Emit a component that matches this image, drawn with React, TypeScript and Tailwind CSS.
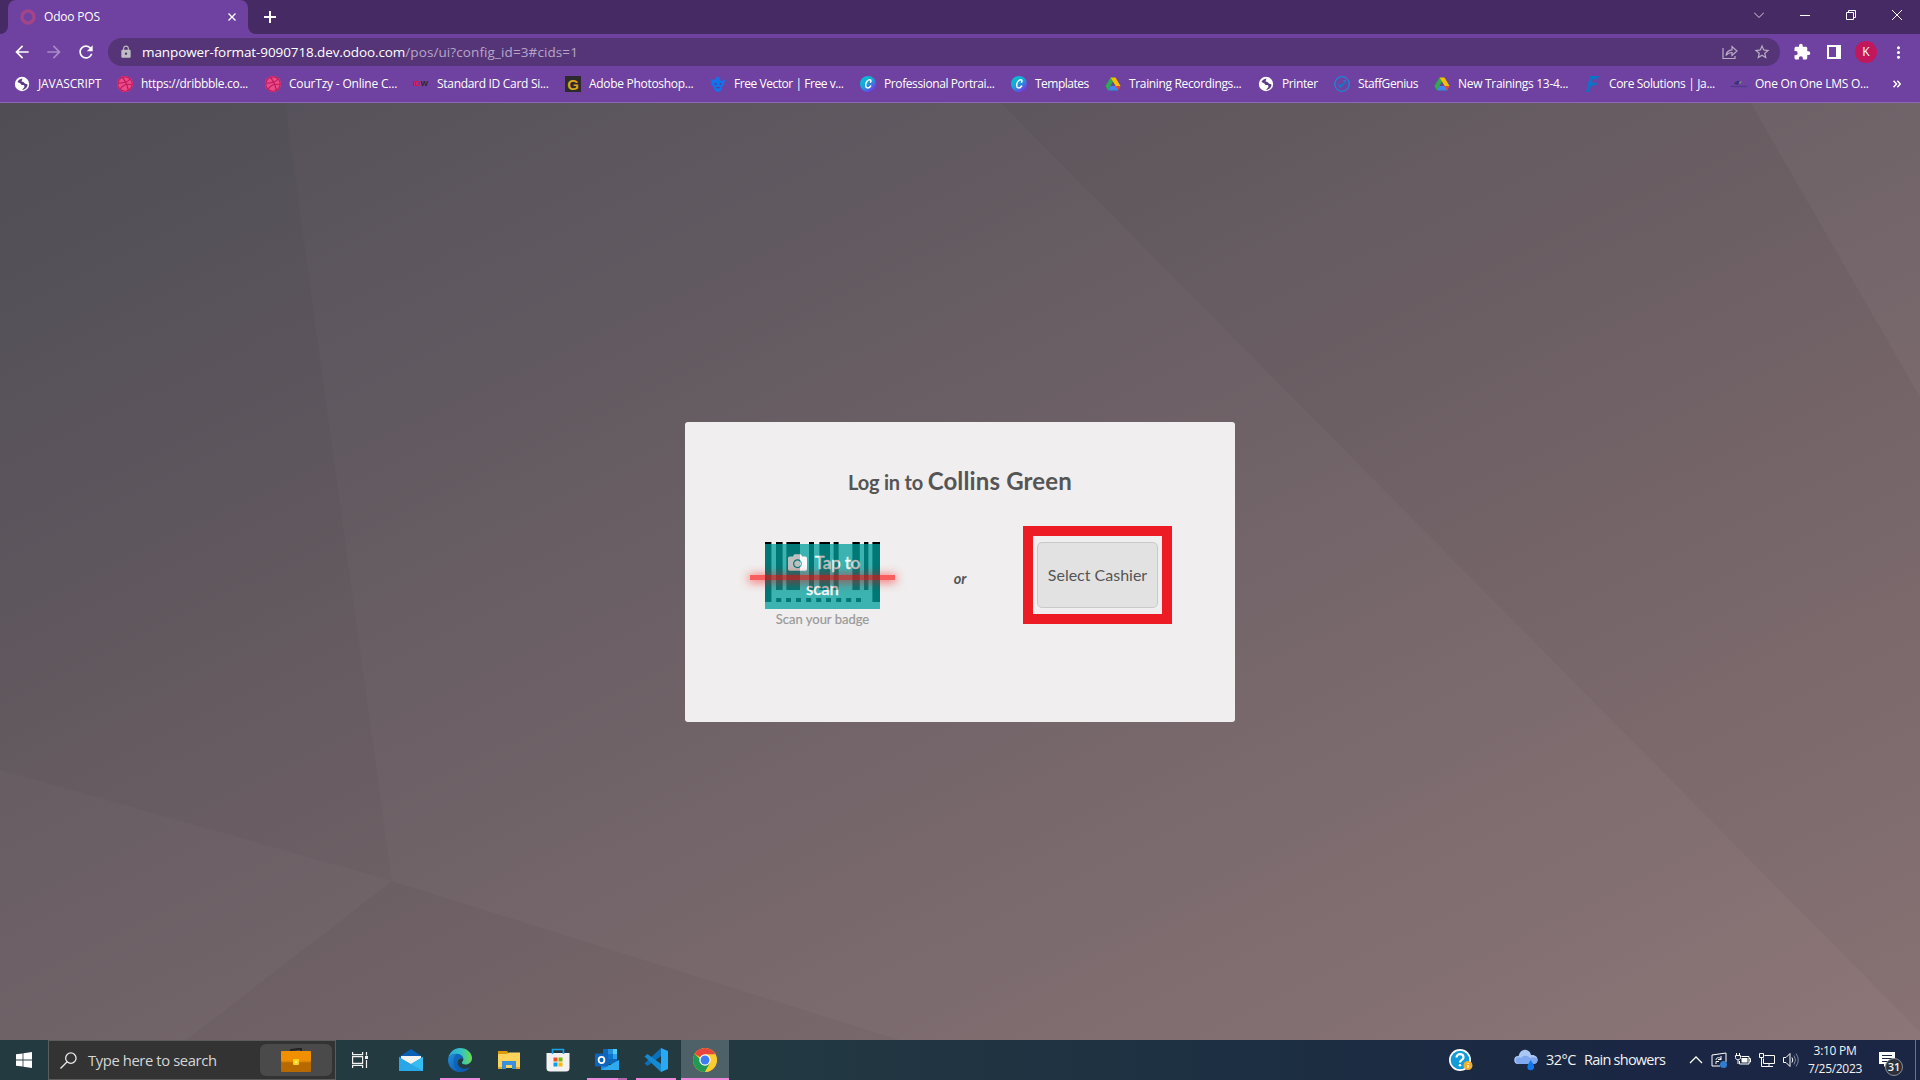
import React from "react";
import { MdArrowBack, MdArrowForward, MdRefresh, MdLock, MdStarOutline, MdExtension, MdMoreVert } from "react-icons/md";
import { FaDribbble, FaCamera } from "react-icons/fa";

const Dribbble = () => (
  <span className="flex size-4 items-center justify-center rounded-full bg-[#ea4c89]">
    <FaDribbble className="size-4 text-[#c2185b]" />
  </span>
);
const Globe = () => (
  <svg viewBox="0 0 16 16" className="size-4">
    <circle cx="8" cy="8" r="7.200" fill="#fff" />
    <path d="M8.500 2.500C6 3 4 4 3.500 6l3 1.500 1 1.500h2.500l.5 2-2.500 3c3.500-.3 5.500-3 5.500-5.500-1.500-.5-3-1-4-2.500l-2-.5z" fill="#5b3a86" />
  </svg>
);
const IdwLogo = () => (
  <span className="block w-4 font-['Liberation_Sans'] text-[8px] leading-4 font-bold tracking-[-0.3px] text-[#2c2735]">
    <span className="text-[#d3193f]">ID</span>W
  </span>
);
const GLogo = () => (
  <span className="flex size-4 items-center justify-center bg-[#2c2a2b] font-['Liberation_Sans'] text-[15px] leading-none font-bold text-[#d9a520]">G</span>
);
const Freepik = () => (
  <svg viewBox="0 0 16 16" className="size-4" fill="#1273eb">
    <path d="M7 0l3 2-1 2 3 1 4-2-2 4 .5 2-2 1c-1 4-2.500 6-4.500 6s-4-2-5-6L.5 8 2 6 0 3l4 1 2-1z" />
    <g fill="#5a3b9e"><circle cx="5.500" cy="8" r="1.100" /><circle cx="10.500" cy="8" r="1.100" /><path d="M5.500 11h5l-1.500 1.200h-2z" /></g>
  </svg>
);
const Canva = () => (
  <svg viewBox="0 0 16 16" className="size-4">
    <defs>
      <linearGradient id="canva" x1="0" y1="0" x2=".8" y2="1">
        <stop offset="0" stopColor="#00c8cc" /><stop offset=".5" stopColor="#18a5da" /><stop offset="1" stopColor="#7d2ae8" />
      </linearGradient>
    </defs>
    <circle cx="8" cy="8" r="8" fill="url(#canva)" />
    <path d="M10.500 6.200c.8-1 .7-2.500-.8-2.500-2 0-4 2.800-4 5.500 0 3.500 3.200 3.500 5 .8" fill="none" stroke="#fff" strokeWidth="1.400" strokeLinecap="round" />
  </svg>
);
const Drive = () => (
  <svg viewBox="0 0 16 16" className="size-4">
    <path d="M5.500 1.500h5l5 8.500-2.500 4.500H3L.5 10z" fill="#188038" />
    <path d="M5.500 1.500L8 5.800 3 14.500.5 10z" fill="#34a853" />
    <path d="M5.500 1.500h5l5 8.500h-5z" fill="#fbbc04" />
    <path d="M3 14.500L5.500 10h10L13 14.500z" fill="#4285f4" />
    <path d="M10.500 10h5L13 14.500z" fill="#ea4335" />
    <path d="M8 6l2.500 4h-5z" fill="#6f41a0" />
  </svg>
);
const Staff = () => (
  <svg viewBox="0 0 16 16" className="size-4" fill="none" stroke="#1b87d6">
    <circle cx="8" cy="8" r="7.300" strokeWidth="1.300" />
    <path d="M4.500 8l2.500 2.500L12 5.500" strokeWidth="1.800" stroke="#1276c4" />
    <path d="M5 10.500l2 .5M9 5l3-.5" />
  </svg>
);
const Core = () => (
  <svg viewBox="0 0 16 16" className="size-4" fill="#0b74c6">
    <path d="M5 0h9l-1.500 3.200H7.500L7 6.500h5L11 9.500H6L4 16H1z" />
  </svg>
);
const OneOnOne = () => (
  <svg viewBox="0 0 16 16" className="size-4">
    <path d="M3 8q2-4 6-3l-2 4z" fill="#39347d" /><path d="M8 6l3-1-2 3z" fill="#79a16b" />
    <path d="M0 10.500h16" stroke="#4a3a88" strokeWidth="1.200" />
  </svg>
);

const bookmarks: { icon: React.FC; label: string; box: string; text: string }[] = [
  { icon: Globe, label: "JAVASCRIPT", box: "w-[103px]", text: "tracking-[-0.1px]" },
  { icon: Dribbble, label: "https://dribbble.co...", box: "w-[148px]", text: "tracking-[-0.3px]" },
  { icon: Dribbble, label: "CourTzy - Online C...", box: "w-[148px]", text: "tracking-[-0.2px]" },
  { icon: IdwLogo, label: "Standard ID Card Si...", box: "w-[152px]", text: "tracking-[-0.3px]" },
  { icon: GLogo, label: "Adobe Photoshop...", box: "w-[145px]", text: "tracking-[-0.3px]" },
  { icon: Freepik, label: "Free Vector | Free v...", box: "w-[150px]", text: "tracking-[-0.45px]" },
  { icon: Canva, label: "Professional Portrai...", box: "w-[151px]", text: "tracking-[-0.4px]" },
  { icon: Canva, label: "Templates", box: "w-[94px]", text: "tracking-[-0.5px]" },
  { icon: Drive, label: "Training Recordings...", box: "w-[153px]", text: "tracking-[-0.35px]" },
  { icon: Globe, label: "Printer", box: "w-[76px]", text: "tracking-[-0.4px]" },
  { icon: Staff, label: "StaffGenius", box: "w-[100px]", text: "tracking-[-0.4px]" },
  { icon: Drive, label: "New Trainings 13-4...", box: "w-[151px]", text: "tracking-[-0.3px]" },
  { icon: Core, label: "Core Solutions | Ja...", box: "w-[146px]", text: "tracking-[-0.35px]" },
  { icon: OneOnOne, label: "One On One LMS O...", box: "w-[154px]", text: "tracking-[-0.25px]" },
];

function TitleBar() {
  return (
    <div className="flex h-[34px] items-stretch bg-[#452a63]">
      <div className="flex w-2 items-end bg-[#6f41a0]"><div className="h-[34px] w-2 rounded-br-lg bg-[#452a63]" /></div>
      <div className="flex w-60 items-center rounded-t-lg bg-[#6f41a0] pl-3 text-white">
        <svg viewBox="0 0 16 16" className="size-4"><circle cx="8" cy="8" r="6" fill="none" stroke="#a24689" strokeWidth="3.400" /></svg>
        <span className="ml-2 w-[184px] text-[12px] tracking-[-0.2px]">Odoo POS</span>
        <svg viewBox="0 0 8 8" className="size-2" stroke="#fff" strokeWidth="1.400"><path d="M.5.5l7 7M7.500.5l-7 7" /></svg>
      </div>
      <div className="flex w-2 items-end bg-[#6f41a0]"><div className="h-[34px] w-2 rounded-bl-lg bg-[#452a63]" /></div>
      <div className="flex flex-1 items-center pl-2">
        <svg viewBox="0 0 12 12" className="size-3" stroke="#fff" strokeWidth="2"><path d="M6 0v12M0 6h12" /></svg>
      </div>
      <div className="flex h-[29px] items-center gap-9 pr-[18px]">
        <svg viewBox="0 0 10 10" className="size-2.5" fill="none" stroke="#d8cfe0"><path d="M0 2.500l5 5 5-5" /></svg>
        <svg viewBox="0 0 10 10" className="size-2.5" stroke="#fff"><path d="M0 5.500h10" /></svg>
        <svg viewBox="0 0 10 10" className="size-2.5" fill="none" stroke="#fff"><path d="M.5 2.500h7v7h-7zM2.500 2.500v-2h7v7h-2" /></svg>
        <svg viewBox="0 0 10 10" className="size-2.5" stroke="#fff"><path d="M0 0l10 10M10 0L0 10" /></svg>
      </div>
    </div>
  );
}

function Toolbar() {
  return (
    <div className="flex h-9 items-center bg-[#6f41a0] text-white">
      <div className="flex w-[108px] items-center gap-3 pl-3">
        <MdArrowBack className="size-5" />
        <MdArrowForward className="size-5 text-[#a98bc8]" />
        <MdRefresh className="size-5" />
      </div>
      <div className="flex h-7 w-[1672px] items-center rounded-full bg-[#553577] pl-[11px]">
        <MdLock className="size-[14px] text-[#c0bcc4]" />
        <div className="ml-[9px] flex-1 text-[13.500px] leading-5 whitespace-nowrap">
          <span className="tracking-[-0.100px]">manpower-format-9090718.dev.odoo.com</span>
          <span className="tracking-[0.100px] text-[#b7a6c9]">/pos/ui?config_id=3#cids=1</span>
        </div>
        <svg viewBox="0 0 16 16" className="mr-[15px] size-4" fill="none" stroke="#b9adc4" strokeWidth="1.200">
          <path d="M1 4v10.500h12V12" /><path d="M4 11.500C4.500 8 6.500 6 10 5.800V2.500l5 4.500-5 4.500V8.500C7.500 8.500 5.500 9.500 4 11.500z" />
        </svg>
        <MdStarOutline className="mr-[9px] size-[18px] text-[#b9adc4]" />
      </div>
      <MdExtension className="ml-[13px] size-[18px]" />
      <div className="ml-4 size-[14px] border-2 border-r-[5px] border-white" />
      <div className="ml-[14px] flex size-[22px] items-center justify-center rounded-full bg-[#c2185b] text-[12px]">K</div>
      <MdMoreVert className="ml-3 size-[19px]" />
    </div>
  );
}

function Bookmarks() {
  return (
    <div className="flex h-[33px] items-center border-b border-[#8f67b7] bg-[#6f41a0] pb-1 pl-[14px] text-[12px] text-white">
      {bookmarks.map(({ icon: Icon, label, box, text }) => (
        <div key={label} className={`flex shrink-0 items-center gap-2 whitespace-nowrap ${box}`}>
          <span className="w-4 shrink-0"><Icon /></span>
          <span className={text}>{label}</span>
        </div>
      ))}
      <svg viewBox="0 0 8 8" className="ml-[8px] size-2" fill="none" stroke="#fff" strokeWidth="1.500"><path d="M.5.8L3.500 4 .5 7.200M4.300.8L7.300 4 4.300 7.200" /></svg>
    </div>
  );
}

const bars = [[0, 6.4, 60], [11, 6.6, 48], [21.4, 13.6, 48], [44, 5, 48], [54.4, 10.600, 48], [68.600, 5, 48], [87.4, 7.4, 48], [99, 4.400, 48], [107.4, 7.6, 60]];
const dots = [11.200, 21, 31, 41.2, 51.2, 61, 71.2, 81.2, 91];

function LoginCard() {
  return (
    <div className="h-[300px] w-[550px] rounded-[3px] bg-[#f0eeee] pt-[43px] font-['Lato'] text-[#555]">
      <h1 className="text-center text-[20px] leading-8 font-bold tracking-[-0.2px] whitespace-nowrap">
        Log in to <span className="text-[24px] tracking-[0.15px]">Collins Green</span>
      </h1>
      <div className="mt-[28px] flex items-start">
        <div className="ml-[65px] w-[145px]">
          <div className="relative mt-4 ml-[15px] h-[67px] w-[115px]">
            <svg viewBox="0 0 115 67" className="block h-[67px] w-[115px]">
              {bars.map(([x, w, h]) => <rect key={x} x={x} y="0" width={w} height={h} />)}
              {dots.map((x) => <rect key={x} x={x} y="56" width="5" height="4" />)}
            </svg>
            <div className="absolute inset-x-0 top-[2px] h-[65px] bg-[#00a09d] pt-[6px] text-center text-[16.700px] leading-[26px] font-medium text-white opacity-75 [-webkit-text-stroke:0.3px_white]">
              <FaCamera className="mr-2 -mt-1 ml-[3px] inline size-[19px]" />Tap to<br />scan
            </div>
            <div className="absolute top-[33px] left-[-15px] h-[5px] w-[145px] bg-[#ff0000] opacity-60 shadow-[0_1px_10px_1px_#ff0000]" />
          </div>
          <p className="text-center text-[13px] leading-[21px] text-[#999] [-webkit-text-stroke:0.2px_#999]">Scan your badge</p>
        </div>
        <div className="mt-[41px] ml-[44px] w-[42px] text-center text-[14.500px] leading-6 font-bold italic">or</div>
        <div className="ml-[42px] h-[98px] w-[149px] border-[10px] border-[#ed1c24] pt-[6px] pl-1">
          <button className="h-[66px] w-[121px] rounded-[5px] border border-[#c9c9c9] bg-[#e2e2e2] pb-px text-[16px] whitespace-nowrap">Select Cashier</button>
        </div>
      </div>
    </div>
  );
}

function Desktop() {
  return (
    <main className="relative flex h-[937px] justify-center bg-linear-to-br from-[#524f58] to-[#8d7677] pt-[319px]">
      <svg viewBox="0 0 1920 937" className="absolute inset-0 h-[937px] w-[1920px]">
        <path d="M0 0H285L392 778 0 667z" fill="#000" opacity=".025" />
        <path d="M392 778L900 937H186z" fill="#000" opacity=".03" />
        <path d="M1001 0H1751L1920 294V929z" fill="#000" opacity=".03" />
        <path d="M1751 0H1920V294z" fill="#fff" opacity=".01" />
      </svg>
      <div className="relative"><LoginCard /></div>
    </main>
  );
}

const Mail = () => (
  <svg viewBox="0 0 24 24" className="size-6">
    <path d="M0 9L12 1l12 8v4H0z" fill="#0a60b5" /><path d="M2 8h20v6l-10 3L2 14z" fill="#f3f3f3" />
    <path d="M0 9l12 7L24 9v14H0z" fill="#2aa5ea" /><path d="M0 23L24 9v14z" fill="#35bdf3" /><path d="M0 23l12-7 12 7z" fill="#1e93dd" opacity=".5" />
  </svg>
);
const Edge = () => (
  <svg viewBox="0 0 24 24" className="size-6">
    <defs>
      <linearGradient id="edgeTop"><stop offset="0" stopColor="#2aa7e1" /><stop offset=".55" stopColor="#35c3c2" /><stop offset="1" stopColor="#6bdc4c" /></linearGradient>
      <linearGradient id="edgeBody" x1="0" y1="0" x2="1" y2="1"><stop offset="0" stopColor="#1c8fdb" /><stop offset="1" stopColor="#0f4ea8" /></linearGradient>
    </defs>
    <path d="M.3 10C1.500 4 6.500 0 12 0c7 0 12 5 12 10 0 4-3 6.500-6.500 6.500-3 0-4-1.300-3.500-2.200 1-1.300 1.300-2 1.300-3C15.300 8 12 6 8 6 4 6 1.500 8 .3 10z" fill="url(#edgeTop)" />
    <path d="M.3 10C2 7 5 5.800 8 5.800c4 0 7 2.200 7.300 5.200-1.500-1.500-5.300-1-5.800 3-.5 4 3.500 7.500 8 7 2-.2 3.500-1 4.500-1.800C19.500 22.500 16 24 12 24 5 24 0 18.500 0 12z" fill="url(#edgeBody)" />
    <path d="M8 6c-4 5-3.500 14 4 18 4 0 8-1.800 10-4.800-6 3-12.500.8-12.500-5.200 0-4 4-5 5.800-3C15 8 12 6 8 6z" fill="#0b5cb0" opacity=".65" />
  </svg>
);
const Folder = () => (
  <svg viewBox="0 0 24 24" className="size-6">
    <path d="M1 3h9l1.500 2H23v3H1z" fill="#dd9a07" /><path d="M1 6h9l2-1.500h11V20H1z" fill="#ffd35c" />
    <path d="M5 21v-8h14v8h-4v-4H9v4z" fill="#3b90dc" /><path d="M1 19h4v2H1zM19 19h4v2h-4z" fill="#e8ad28" />
  </svg>
);
const Store = () => (
  <svg viewBox="0 0 24 24" className="size-6">
    <path d="M6.500 6V1.500h11V6" fill="none" stroke="#18a4e8" strokeWidth="1.600" />
    <path d="M.5 5h23v15a3.500 3.500 0 01-3.500 3.500H4A3.500 3.500 0 01.5 20z" fill="#f3f1f2" />
    <path d="M6.500 4.500V6M17.500 4.500V6" stroke="#18a4e8" strokeWidth="1.600" />
    <path d="M7.500 9.500h4v4h-4z" fill="#f04f23" /><path d="M12.500 9.500h4v4h-4z" fill="#7cb901" />
    <path d="M7.500 14.500h4v4h-4z" fill="#03a2ed" /><path d="M12.500 14.500h4v4h-4z" fill="#feb800" />
  </svg>
);
const Outlook = () => (
  <svg viewBox="0 0 24 24" className="size-6">
    <path d="M8 1h14v15H8z" fill="#0f67b9" /><path d="M13 1h5v5h-5z" fill="#2490df" /><path d="M18 1h4v5h-4z" fill="#50d1fa" />
    <path d="M13 6h5v5h-5z" fill="#0f75cb" /><path d="M18 6h4v5h-4z" fill="#29a4ea" />
    <path d="M6 12l9 5.500 9-5.500v10H6z" fill="#1f8fdd" /><path d="M6 22l18-10v10z" fill="#2eaaee" />
    <rect y="5.500" width="13" height="13" rx="1" fill="#0f65bb" />
    <ellipse cx="6.500" cy="12" rx="2.900" ry="3.200" fill="none" stroke="#fff" strokeWidth="1.800" />
  </svg>
);
const Code = () => (
  <svg viewBox="0 0 24 24" className="size-6">
    <path d="M17 0l1.500 7L3.500 18 .5 15.500z" fill="#0a70b8" /><path d="M.5 8.500l3-2.500L18.500 17 17 24z" fill="#168ad1" />
    <path d="M17 0l7 3v18l-7 3z" fill="#2aa9f2" />
  </svg>
);
const Chrome = () => (
  <svg viewBox="0 0 24 24" className="size-6">
    <circle cx="12" cy="12" r="12" fill="#fdcb2e" />
    <path d="M12 12L1.610 6A12 12 0 0112 0a12 12 0 0110.400 6.500H12z" fill="#e8453c" />
    <path d="M12 12h-4L1.610 6A12 12 0 0012 24l5-9z" fill="#209a52" />
    <path d="M12 6.500h10.400A12 12 0 0112 24l5-9z" fill="#fdcb2e" />
    <circle cx="12" cy="12" r="5.700" fill="#fff" /><circle cx="12" cy="12" r="4.500" fill="#3d7def" />
  </svg>
);

const apps: { name: string; icon: React.FC; bg: string; line: string }[] = [
  { name: "Mail", icon: Mail, bg: "", line: "w-0" },
  { name: "Edge", icon: Edge, bg: "", line: "w-10" },
  { name: "Explorer", icon: Folder, bg: "", line: "w-0" },
  { name: "Store", icon: Store, bg: "", line: "w-0" },
  { name: "Outlook", icon: Outlook, bg: "", line: "w-10 border-r-[9px] border-[#b267ad]" },
  { name: "Code", icon: Code, bg: "", line: "w-10" },
  { name: "Chrome", icon: Chrome, bg: "bg-[#4f6168]", line: "w-12" },
];

function Taskbar() {
  return (
    <div className="flex h-10 items-stretch bg-linear-to-r from-[#233a41] from-35% via-[#1d2f42] via-65% to-[#1a2643] to-85% text-[#f2f2f2]">
      <div className="flex w-12 items-center justify-center">
        <svg viewBox="0 0 16 16" className="size-4" fill="#fff"><path d="M0 2.300L6.600 1.400v6.200H0zM7.400 1.200L16 0v7.600H7.400zM0 8.400h6.600v6.200L0 13.700zM7.400 8.400H16V16l-8.600-1.200z" /></svg>
      </div>
      <div className="flex w-72 items-center border border-[#5c5c5c] bg-[#333] pl-[11px]">
        <svg viewBox="0 0 18 18" className="size-[17px]" fill="none" stroke="#e8e8e8" strokeWidth="1.400"><circle cx="11.500" cy="6.500" r="5.500" /><path d="M7.600 10.400L.5 17.500" /></svg>
        <span className="ml-[11px] w-[172px] text-[14.800px] tracking-[-0.4px] whitespace-nowrap text-[#d6d6d6]">Type here to search</span>
        <div className="flex h-8 w-[72px] items-center justify-center rounded-md bg-[#4a4a4a]">
          <svg viewBox="0 0 30 25" className="h-[25px] w-[30px]">
            <path d="M10 4V2l10-1.500V4" fill="none" stroke="#222" strokeWidth="2" />
            <rect y="3" width="30" height="11" rx="1" fill="#f09000" /><rect y="14" width="30" height="10" rx="1" fill="#b76a00" />
            <path d="M0 14h30" stroke="#c97a00" /><rect x="12" y="11" width="6" height="6" rx="1" fill="#ffd21c" /><rect x="14" y="13" width="2" height="2" fill="#fff27a" />
          </svg>
        </div>
      </div>
      <div className="mr-[3px] flex w-12 items-center justify-center">
        <svg viewBox="0 0 16 16" className="size-4" fill="none" stroke="#f2f2f2" strokeWidth="1.200">
          <path d="M.6 0v2.600h10V0M.6 16v-2.600h10V16M.6 4.600h10v6.800H.6zM14.500 0v3.500M14.500 8v8" /><path d="M13 4h3v3h-3z" fill="#f2f2f2" stroke="none" />
        </svg>
      </div>
      <div className="flex flex-1 gap-px">
        {apps.map(({ name, icon: Icon, bg, line }) => (
          <div key={name} className={`flex w-12 flex-col items-center justify-between pt-2 ${bg}`}>
            <Icon /><div className={`h-[2px] bg-[#ee89de] ${line}`} />
          </div>
        ))}
      </div>
      <div className="flex items-center text-[14.500px] whitespace-nowrap">
        <svg viewBox="0 0 24 24" className="mr-[41px] size-6">
          <circle cx="11" cy="12" r="11" fill="#fff" /><circle cx="11" cy="12" r="9.300" fill="#129bd8" />
          <path d="M7.500 9.500c0-4.500 7-4.500 7 0 0 2.500-3.500 2.300-3.500 5" fill="none" stroke="#fff" strokeWidth="2.200" /><circle cx="11" cy="17.300" r="1.300" fill="#fff" />
          <circle cx="19" cy="17.500" r="4.500" fill="#f3ae2c" /><path d="M19 15v1M19 17v3" stroke="#fff" strokeWidth="1.200" />
        </svg>
        <svg viewBox="0 0 24 22" className="h-[22px] w-6">
          <path d="M4 15a4 4 0 01.5-8C6 2 9 0 12.500 1c2.500.5 4 2.500 4.500 5 8-1 9 9 2 9z" fill="#a9c8f5" />
          <path d="M2 13c-2-4 3-6 5-4 3-4 8-2 9 0 5-2 9 1 7 4-1 2-3 2-5 2H5c-1 0-2-1-3-2z" fill="#7fa8ee" />
          <path d="M16.500 11c3 4 4 5.500 3.500 8-.8 3-6 3-6.500 0-.5-3 1.500-4.500 3-8z" fill="#1177ea" />
        </svg>
        <span className="ml-2 w-[38px] tracking-[-0.5px]">32°C</span>
        <span className="w-[105px] tracking-[-0.75px]">Rain showers</span>
        <div className="flex items-center gap-2">
          <svg viewBox="0 0 14 8" className="h-2 w-[14px]" fill="none" stroke="#fff" strokeWidth="1.300"><path d="M1 7l6-6 6 6" /></svg>
          <svg viewBox="0 0 16 16" className="size-4" fill="none" stroke="#fff"><path d="M1 3l14-2v9M1 3v11h8" /><path d="M5 8c0-3 5-3 5-.5M10 4v3.500H7M5 12V9.500h3" /><circle cx="12.500" cy="12.500" r="3.500" fill="#2f7fd1" stroke="none" /></svg>
          <svg viewBox="0 0 16 16" className="size-4" fill="none" stroke="#fff"><path d="M6.500 4.500h7.500v7.500H4.500V9M14 6.500h1.500V10H14M1.500 1v2.500M4.500 1v2.500M.5 3.500h5v2c0 3-5 3-5 0zM3 8v4" /><path d="M6.500 6h6v4.500h-6z" fill="#fff" stroke="none" /></svg>
          <svg viewBox="0 0 16 16" className="size-4" fill="none" stroke="#fff"><path d="M5.500 3.500h10v8H4.500v-5M10 11.500v3M6 14.500h8M.5 1.500h4v4h-4zM2.500 5.500v9H6" /></svg>
          <svg viewBox="0 0 16 16" className="size-4" fill="none" stroke="#fff"><path d="M.5 5.500h2.500l4-4v13l-4-4H.5z" /><path d="M9 5.500q1.500 2.500 0 5" /><path d="M11 3.500q3 4.500 0 9M13 1.500q4.500 6.500 0 13" stroke="#7e879c" /></svg>
        </div>
        <div className="ml-2 w-14 text-center text-[12px] leading-[18px] tracking-[-0.300px]"><div>3:10 PM</div><div>7/25/2023</div></div>
        <div className="relative ml-4 h-10 w-9">
          <svg viewBox="0 0 16 16" className="mt-3 size-4" fill="#fff"><path d="M0 0h16v12H8l-3 3v-3H0z" /><path d="M3 3.500h10M3 6.500h10M3 9.500h6" stroke="#1a2643" /></svg>
          <span className="absolute top-[18px] left-[6px] flex size-[18px] items-center justify-center rounded-full border border-[#8a8f98] bg-[#2c3038] text-[11px] font-semibold">31</span>
        </div>
        <div className="mr-1 h-10 w-px bg-[#6b7388]" />
      </div>
    </div>
  );
}

export default function App() {
  return (
    <div className="h-[1080px] w-[1920px] overflow-hidden font-['Open_Sans','Noto_Sans',sans-serif]">
      <TitleBar />
      <Toolbar />
      <Bookmarks />
      <Desktop />
      <Taskbar />
    </div>
  );
}
